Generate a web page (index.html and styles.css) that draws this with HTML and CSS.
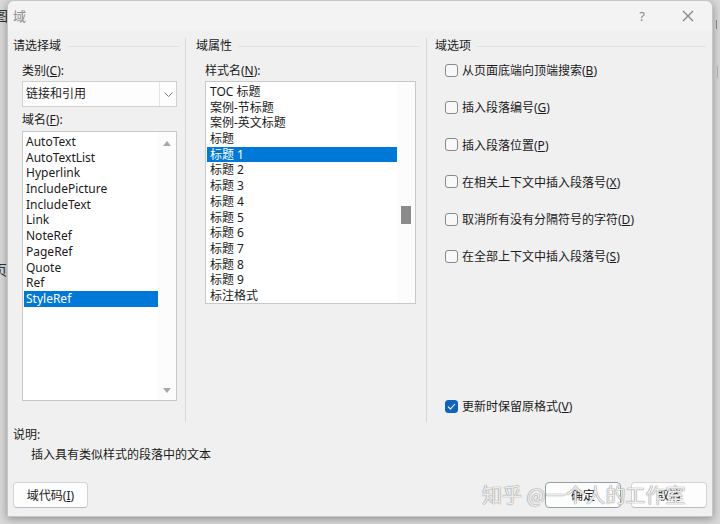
FILE: index.html
```html
<!DOCTYPE html>
<html lang="zh-CN">
<head>
  <meta charset="UTF-8">
  <title>域</title>
  <link rel="stylesheet" href="styles.css">
</head>
<body>
  <div class="desk">
    <span class="desk-glyph g1">图</span>
    <span class="desk-glyph g2">页</span>
    <span class="desk-mark m1"></span>
    <span class="desk-mark m2"></span>
  </div>

  <div class="dialog">
    <div class="titlebar">
      <span class="title">域</span>
      <span class="tb-btn tb-help">?</span>
      <span class="tb-btn tb-close">
        <svg width="12" height="12" viewBox="0 0 12 12"><path d="M1 1L11 11M11 1L1 11" stroke="#7d7d7d" stroke-width="1.1" fill="none"/></svg>
      </span>
    </div>

    <div class="groups">
      <section class="group group-pick">
        <div class="caption"><span>请选择域</span><i></i></div>
        <div class="field-label">类别(<u>C</u>):</div>
        <div class="combo">
          <span class="combo-text">链接和引用</span>
          <span class="combo-btn">
            <svg width="9" height="5" viewBox="0 0 9 5"><path d="M0.5 0.5L4.5 4.5L8.5 0.5" stroke="#7a7a7a" fill="none"/></svg>
          </span>
        </div>
        <div class="field-label field-label-2">域名(<u>F</u>):</div>
        <div class="listbox list-fields">
          <ul class="items">
            <li>AutoText</li>
            <li>AutoTextList</li>
            <li>Hyperlink</li>
            <li>IncludePicture</li>
            <li>IncludeText</li>
            <li>Link</li>
            <li>NoteRef</li>
            <li>PageRef</li>
            <li>Quote</li>
            <li>Ref</li>
            <li class="sel">StyleRef</li>
          </ul>
          <div class="vscroll vscroll-arrows">
            <svg width="8" height="5" viewBox="0 0 8 5"><path d="M0 5L4 0L8 5Z" fill="#a8a8a8"/></svg>
            <svg width="8" height="5" viewBox="0 0 8 5"><path d="M0 0L4 5L8 0Z" fill="#a8a8a8"/></svg>
          </div>
        </div>
      </section>

      <section class="group group-props">
        <div class="caption"><span>域属性</span><i></i></div>
        <div class="field-label">样式名(<u>N</u>):</div>
        <div class="listbox list-styles">
          <ul class="items">
            <li>TOC 标题</li>
            <li>案例-节标题</li>
            <li>案例-英文标题</li>
            <li>标题</li>
            <li class="sel">标题 1</li>
            <li>标题 2</li>
            <li>标题 3</li>
            <li>标题 4</li>
            <li>标题 5</li>
            <li>标题 6</li>
            <li>标题 7</li>
            <li>标题 8</li>
            <li>标题 9</li>
            <li>标注格式</li>
          </ul>
          <div class="vscroll">
            <span class="thumb"></span>
          </div>
        </div>
      </section>

      <section class="group group-opts">
        <div class="caption"><span>域选项</span><i></i></div>
        <label class="opt"><span class="check"></span><span>从页面底端向顶端搜索(<u>B</u>)</span></label>
        <label class="opt"><span class="check"></span><span>插入段落编号(<u>G</u>)</span></label>
        <label class="opt"><span class="check"></span><span>插入段落位置(<u>P</u>)</span></label>
        <label class="opt"><span class="check"></span><span>在相关上下文中插入段落号(<u>X</u>)</span></label>
        <label class="opt"><span class="check"></span><span>取消所有没有分隔符号的字符(<u>D</u>)</span></label>
        <label class="opt"><span class="check"></span><span>在全部上下文中插入段落号(<u>S</u>)</span></label>
        <label class="opt opt-keep">
          <span class="check checked">
            <svg width="9" height="7" viewBox="0 0 9 7"><path d="M1 3.6L3.4 6L8 1" stroke="#fff" stroke-width="1.1" fill="none"/></svg>
          </span>
          <span>更新时保留原格式(<u>V</u>)</span>
        </label>
      </section>
    </div>

    <div class="notes">
      <div>说明:</div>
      <div class="note-text">插入具有类似样式的段落中的文本</div>
    </div>

    <div class="buttons">
      <button class="btn">域代码(<u>I</u>)</button>
      <button class="btn btn-ok">确定</button>
      <button class="btn">取消</button>
    </div>

    <div class="watermark">知乎 @一个人的工作室</div>
  </div>
</body>
</html>
```

FILE: styles.css
```css
* {
  margin: 0;
  padding: 0;
  box-sizing: border-box;
}

body {
  width: 720px;
  height: 524px;
  overflow: hidden;
  position: relative;
  background: #d9d9d9;
  font-family: "Noto Sans", "Noto Sans CJK SC", sans-serif;
  font-size: 12px;
  color: #1b1b1b;
}

/* window behind the dialog, only its edges show */
.desk-glyph {
  position: absolute;
  font-family: "Noto Sans CJK SC", sans-serif;
  font-size: 14px;
  color: #333;
}

.g1 { left: -6px; top: 5px; }
.g2 { left: -7px; top: 259px; }

.desk-mark {
  position: absolute;
  background: #8a8a8a;
  width: 1px;
}

.m1 { left: 716px; top: 20px; height: 9px; }
.m2 { left: 717px; top: 66px; height: 12px; background: #b5b5b5; }

.dialog {
  position: relative;
  z-index: 1;
  margin-left: 7px;
  width: 706px;
  height: 517px;
  background: #f0f0f0;
  border: 1px solid #c6c6c6;
  border-radius: 7px 7px 0 0;
  box-shadow: 0 2px 9px rgba(0, 0, 0, .35);
  display: flex;
  flex-direction: column;
}

.titlebar {
  height: 29px;
  display: flex;
  align-items: center;
  padding: 0 1px 0 5px;
  background: #f3f3f3;
  border-radius: 7px 7px 0 0;
}

.title {
  font-family: "Noto Sans CJK SC", sans-serif;
  font-size: 13px;
  color: #8e8e8e;
}

.tb-btn {
  width: 46px;
  height: 29px;
  display: flex;
  align-items: center;
  justify-content: center;
  color: #8a8a8a;
  font-size: 13px;
}

.tb-help {
  margin-left: auto;
}

.groups {
  display: flex;
  height: 384px;
  margin-top: 8px;
}

.group {
  display: flex;
  flex-direction: column;
}

.group-pick {
  width: 177px;
  padding-left: 5px;
}

.group-props {
  width: 241px;
  border-left: 1px solid #d8d8d8;
  padding-left: 10px;
}

.group-opts {
  flex: 1;
  border-left: 1px solid #d8d8d8;
  padding-left: 8px;
  padding-bottom: 8px;
}

.caption {
  display: flex;
  align-items: center;
  gap: 6px;
  height: 16px;
  line-height: 16px;
  margin-right: 6px;
}

.caption i {
  flex: 1;
  height: 1px;
  background: #e2e2e2;
}

.field-label {
  margin: 9px 0 0 9px;
  line-height: 16px;
}

.field-label-2 {
  margin-top: 5px;
}

.combo {
  margin: 2px 0 0 9px;
  width: 155px;
  height: 26px;
  display: flex;
  background: #fdfdfd;
  border: 1px solid #d0d0d0;
}

.combo-text {
  flex: 1;
  line-height: 24px;
  padding-left: 3px;
}

.combo-btn {
  width: 17px;
  border-left: 1px solid #e4e4e4;
  display: flex;
  align-items: center;
  justify-content: center;
}

.listbox {
  display: flex;
  background: #fff;
  border: 1px solid #c9c9c9;
  overflow: hidden;
}

.list-fields {
  margin: 3px 0 0 9px;
  width: 155px;
  height: 270px;
}

.list-styles {
  margin: 2px 0 0 9px;
  width: 211px;
  height: 223px;
}

.items {
  list-style: none;
  flex: 1;
  padding: 2px 0 0 1px;
}

.items li {
  height: 15.7px;
  line-height: 15.7px;
  padding-left: 2px;
  white-space: nowrap;
}

.list-styles .items li {
  padding-left: 3px;
}

.items li.sel {
  background: #0078d7;
  color: #fff;
}

.vscroll {
  width: 18px;
  display: flex;
  flex-direction: column;
  align-items: center;
  background: #fcfcfc;
}

.vscroll-arrows {
  justify-content: space-between;
  padding: 9px 0 7px;
}

.thumb {
  width: 10px;
  height: 18px;
  margin-top: 124px;
  background: #8b8b8b;
}

.opt {
  display: flex;
  align-items: center;
  gap: 4px;
  height: 16px;
  margin-left: 10px;
  white-space: nowrap;
}

.caption + .opt {
  margin-top: 8px;
}

.opt + .opt {
  margin-top: 21.3px;
}

.opt.opt-keep {
  margin-top: auto;
}

.check {
  width: 13px;
  height: 13px;
  border: 1px solid #8a8a8a;
  border-radius: 3px;
  background: #f8f8f8;
  display: flex;
  align-items: center;
  justify-content: center;
}

.check.checked {
  background: #0f63b8;
  border-color: #0f63b8;
}

.notes {
  margin: 5px 0 0 5px;
  line-height: 16px;
}

.note-text {
  margin-top: 4px;
  padding-left: 18px;
}

.buttons {
  display: flex;
  gap: 10px;
  margin-top: 19px;
  padding: 0 5px;
}

.btn {
  width: 75px;
  height: 26px;
  font: inherit;
  color: #1b1b1b;
  background: #fdfdfd;
  border: 1px solid #d3d3d3;
  border-bottom-color: #bcbcbc;
  border-radius: 4px;
}

.btn-ok {
  margin-left: auto;
  width: 76px;
  border-color: #8ea2a2;
}

.btn + .btn:last-child {
  width: 76px;
}

/* site watermark stamped over the screenshot */
.watermark {
  position: absolute;
  left: 474px;
  top: 482px;
  line-height: 24px;
  font-family: "Noto Sans CJK SC", sans-serif;
  font-size: 20px;
  color: rgba(255, 255, 255, .85);
  text-shadow: 0 0 1px #8a8a8a, 0 0 1px #8a8a8a;
  white-space: nowrap;
  pointer-events: none;
}
```
